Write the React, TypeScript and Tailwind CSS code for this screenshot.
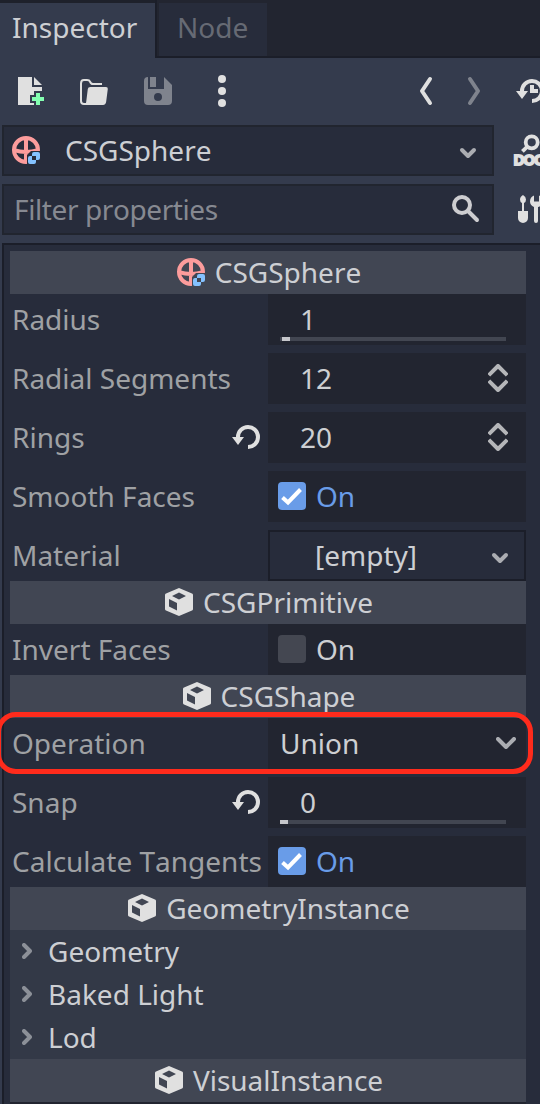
import type { ReactNode } from "react";

function Icon({ children, className = "" }: { children: ReactNode; className?: string }) {
  return (
    <svg viewBox="0 0 16 16" className={`h-8 w-8 shrink-0 ${className}`} fill="#e0e0e0">
      {children}
    </svg>
  );
}

function SphereIcon() {
  return (
    <Icon>
      <clipPath id="sphere-ring">
        <path d="M0 0H16V8.500H10.500L8.500 10.500V16H0z" />
      </clipPath>
      <g fill="none" stroke="#fc9c9c" strokeWidth="2" clipPath="url(#sphere-ring)">
        <circle cx="8" cy="8" r="6" />
        <path d="M8 2v12M2 8.100c4 1.200 8 1.200 12 0" />
      </g>
      <path
        fillRule="evenodd"
        fill="#84c2ff"
        d="M12 9h2a1 1 0 0 1 1 1v2a1 1 0 0 1-1 1h-1v1a1 1 0 0 1-1 1h-2a1 1 0 0 1-1-1v-2a1 1 0 0 1 1-1h1v-1a1 1 0 0 1 1-1zM11 11v2h2v-2z"
      />
    </Icon>
  );
}

function CubeIcon() {
  return (
    <Icon>
      <path
        fillRule="evenodd"
        d="M8 1l6.500 2.800q.5.2.5.7v7q0 .5-.5.800L8 15l-6.500-2.700q-.5-.3-.5-.8v-7q0-.5.5-.7zM8 3.200L4.500 5 8 6.800 11.500 5zM3 6.500v3.700l4 2V8.500z"
      />
    </Icon>
  );
}

function RevertIcon({ clock = false }: { clock?: boolean }) {
  return (
    <Icon>
      <path d="M9 2a6 6 0 0 0-6 6H1l3 4 3-4H5a4 4 0 1 1 4 4v2A6 6 0 0 0 9 2z" />
      {clock && <path d="M8 5h2v2h2v2H8z" />}
    </Icon>
  );
}

function Chevron({ wide = false }: { wide?: boolean }) {
  return (
    <svg viewBox="0 0 20 12" className="h-3 w-5 shrink-0" fill="none" stroke="#abadb2" strokeWidth="4" strokeLinecap="round" strokeLinejoin="round">
      <path d={wide ? "M2 2l8 8 8-8" : "M4 3l6 6 6-6"} />
    </svg>
  );
}

function Header({ title, sphere = false }: { title: string; sphere?: boolean }) {
  return (
    <div className="flex h-[43px] items-center justify-center gap-2 bg-[#414653] pb-px text-[#cdcfd3]">
      {sphere ? <SphereIcon /> : <CubeIcon />}
      <span>{title}</span>
    </div>
  );
}

function Row({ label, revert = false, children }: { label: string; revert?: boolean; children: ReactNode }) {
  return (
    <div className="flex h-[51px]">
      <div className="flex w-[258px] items-center justify-between pr-1.5 pb-px pl-0.5 text-[#9fa1a4]">
        <span>{label}</span>
        {revert && <RevertIcon />}
      </div>
      {children}
    </div>
  );
}

function Field({ children, className = "" }: { children: ReactNode; className?: string }) {
  return <div className={`flex w-[258px] items-center bg-[#222530] pb-px text-[#cdcfd2] ${className}`}>{children}</div>;
}

function Slider({ value, handle }: { value: string; handle: string }) {
  return (
    <Field className="relative pl-8">
      {value}
      <div className="absolute bottom-1 left-3 h-1 w-[226px] bg-[#424651]">
        <div className={`h-1 w-2 bg-[#c6c7cb] ${handle}`} />
      </div>
    </Field>
  );
}

function Spin({ value }: { value: string }) {
  return (
    <Field className="justify-between pr-[18px] pl-8">
      {value}
      <svg viewBox="0 0 20 28" className="h-7 w-5" fill="none" stroke="#b5b6b9" strokeWidth="4" strokeLinejoin="round">
        <path d="M.8 11.200L10 2l9.200 9.200M.8 16.800L10 26l9.200-9.200" />
      </svg>
    </Field>
  );
}

function Check({ on = false }: { on?: boolean }) {
  return (
    <Field className="gap-2.5 pl-2.5">
      <div className={`h-7 w-7 rounded ${on ? "bg-[#699ce8]" : "bg-[#444751]"}`}>
        {on && (
          <svg viewBox="0 0 28 28" fill="none" stroke="#fff" strokeWidth="4">
            <path d="M4.500 15.500l5.500 5L22.500 7.500" />
          </svg>
        )}
      </div>
      <span className={on ? "text-[#699ce8]" : ""}>On</span>
    </Field>
  );
}

function Fold({ label }: { label: string }) {
  return (
    <div className="flex h-[43px] items-center gap-4 bg-[#333947] pb-px pl-3 text-[#cdcfd3]">
      <svg viewBox="0 0 10 16" className="h-4 w-2.5" fill="none" stroke="#8c9098" strokeWidth="4" strokeLinecap="round" strokeLinejoin="round">
        <path d="M2 2l6 6-6 6" />
      </svg>
      <span>{label}</span>
    </div>
  );
}

export default function App() {
  return (
    <div className="relative h-[1104px] w-[540px] overflow-hidden bg-[#343b4d] font-['Noto_Sans',sans-serif] text-[28px] leading-[38px] whitespace-nowrap [font-kerning:none]">
      <div className="flex h-[58px] bg-[#222530]">
        <div className="w-[155px] border-t-[3px] border-[#1e212b] bg-[#343b4d] pt-[5px] pl-3 text-[#cdcfd3]">Inspector</div>
        <div className="flex flex-1 border-b-2 border-l-2 border-[#1b1e29] pt-[3px] pl-0.5">
          <div className="w-[108px] bg-[#272c3b] pt-[5px] pl-[18px] text-[#666a74]">Node</div>
        </div>
      </div>

      <div className="flex h-[67px] items-center pb-px pl-4">
        <Icon>
          <path d="M1 1h7v5h5v2H9v2H7v4h2v1H1zM9 1l4 4H9z" />
          <path d="M10 9h2v2h2v2h-2v2h-2v-2H8v-2h2z" fill="#84ffb1" />
        </Icon>
        <Icon className="ml-[30px]">
          <path
            d="M4 14.500H3a1.500 1.500 0 0 1-1.500-1.500V4.200Q1.500 2.500 3 2.500h1.500Q5.700 2.500 6 3.300q.4 1.200 1.500 1.200H12"
            fill="none"
            stroke="#e0e0e0"
          />
          <path d="M6.200 6H14q1 0 .9 1l-.8 6.300Q13.900 15 12.500 15H3q1-.2 1.100-1.500L4.900 7Q5 6 6.200 6z" />
        </Icon>
        <Icon className="ml-8">
          <g fill="#7f838d">
            <path fillRule="evenodd" d="M3 1v6h8V1l4 4v8a2 2 0 0 1-2 2H3a2 2 0 0 1-2-2V3a2 2 0 0 1 2-2zM8 9a2 2 0 1 0 0 4 2 2 0 0 0 0-4z" />
            <path d="M4 1h3v5H4z" />
          </g>
        </Icon>
        <Icon className="ml-8">
          <circle cx="8" cy="2" r="2" />
          <circle cx="8" cy="8" r="2" />
          <circle cx="8" cy="14" r="2" />
        </Icon>
        <Icon className="ml-[172px]">
          <path d="M10 2L6 8l4 6" fill="none" stroke="#e0e0e0" strokeWidth="2" strokeLinecap="round" strokeLinejoin="round" />
        </Icon>
        <Icon className="ml-4">
          <path d="M6 2l4 6-4 6" fill="none" stroke="#7f838d" strokeWidth="2" strokeLinecap="round" strokeLinejoin="round" />
        </Icon>
        <div className="ml-6">
          <RevertIcon clock />
        </div>
      </div>

      <div className="flex h-[51px] items-start pl-0.5">
        <div className="flex h-[51px] w-[492px] shrink-0 items-center border-2 border-[#21252f] bg-[#272c3b] pr-[14px] pb-px pl-1.5 text-[#cdcfd3]">
          <SphereIcon />
          <span className="ml-[23px] flex-1">CSGSphere</span>
          <div className="mt-1.5">
            <Chevron />
          </div>
        </div>
        <Icon className="mt-[9px] ml-[18px]">
          <circle cx="9.850" cy="4.150" r="3" fill="none" stroke="#e0e0e0" strokeWidth="1.900" />
          <path d="M7.800 6.200L5.200 8.700" stroke="#e0e0e0" strokeWidth="1.900" />
          <text x=".9" y="15.600" fontSize="7.300" textLength="15.500" fontWeight="bold" fontFamily="Liberation Sans, sans-serif" stroke="#e0e0e0" strokeWidth=".9">
            DOC
          </text>
        </Icon>
      </div>

      <div className="mt-2 flex h-[51px] items-start pl-0.5">
        <div className="flex h-[51px] w-[492px] shrink-0 items-center justify-between border-2 border-[#21252f] bg-[#272c3b] pr-[11px] pb-px pl-2.5 text-[#868991]">
          <span className="tracking-[-0.4px]">Filter properties</span>
          <Icon>
            <g fill="none" stroke="#cdcdd0" strokeWidth="2" strokeLinecap="round">
              <circle cx="6.500" cy="6" r="4" />
              <path d="M9.500 9l4.500 4.500" />
            </g>
          </Icon>
        </div>
        <Icon className="mt-[9px] ml-[22px]">
          <path d="M3.500 1C2.500 1.500 2 2.500 2 3.200Q2 4.500 3 5v4H1v3.500a2.500 2.500 0 0 0 5 0V9H4V5q1-.5 1-1.800Q5 1.800 3.500 1z" />
          <path d="M9 1.200v3h2.500v-3Q13.500 2 13.500 4.200 13.500 6.200 11 7v7a1 1 0 0 1-2 0V7Q7 6 7 4.200 7 2 9 1.200z" />
        </Icon>
      </div>

      <div className="mt-2 ml-0.5 h-[870px] w-[550px] border-2 border-[#1b1e29] bg-[#272c3b] pt-1.5 pl-1.5">
        <div className="w-[516px]">
          <Header title="CSGSphere" sphere />
          <div className="flex flex-col gap-2">
            <Row label="Radius">
              <Slider value="1" handle="ml-0.5" />
            </Row>
            <Row label="Radial Segments">
              <Spin value="12" />
            </Row>
            <Row label="Rings" revert>
              <Spin value="20" />
            </Row>
            <Row label="Smooth Faces">
              <Check on />
            </Row>
            <Row label="Material">
              <div className="flex w-[258px] items-center justify-between border-2 border-[#1b1e29] pr-3.5 pb-px pl-[45px] text-[#cdcfd3]">
                <span>[empty]</span>
                <div className="mt-1.5">
                  <Chevron />
                </div>
              </div>
            </Row>
          </div>
          <Header title="CSGPrimitive" />
          <Row label="Invert Faces">
            <Check />
          </Row>
          <Header title="CSGShape" />
          <div className="flex flex-col gap-2">
            <Row label="Operation">
              <Field className="justify-between pr-2.5 pl-3">
                <span>Union</span>
                <Chevron wide />
              </Field>
            </Row>
            <Row label="Snap" revert>
              <Slider value="0" handle="ml-0" />
            </Row>
            <Row label="Calculate Tangents">
              <Check on />
            </Row>
          </div>
          <Header title="GeometryInstance" />
          <Fold label="Geometry" />
          <Fold label="Baked Light" />
          <Fold label="Lod" />
          <Header title="VisualInstance" />
          <div className="h-0.5 bg-[#222530]" />
        </div>
      </div>
      <div className="absolute top-[712px] left-[-4px] h-[62px] w-[537px] rounded-[20px] border-[5px] border-[#ff2b1c]" />
    </div>
  );
}
